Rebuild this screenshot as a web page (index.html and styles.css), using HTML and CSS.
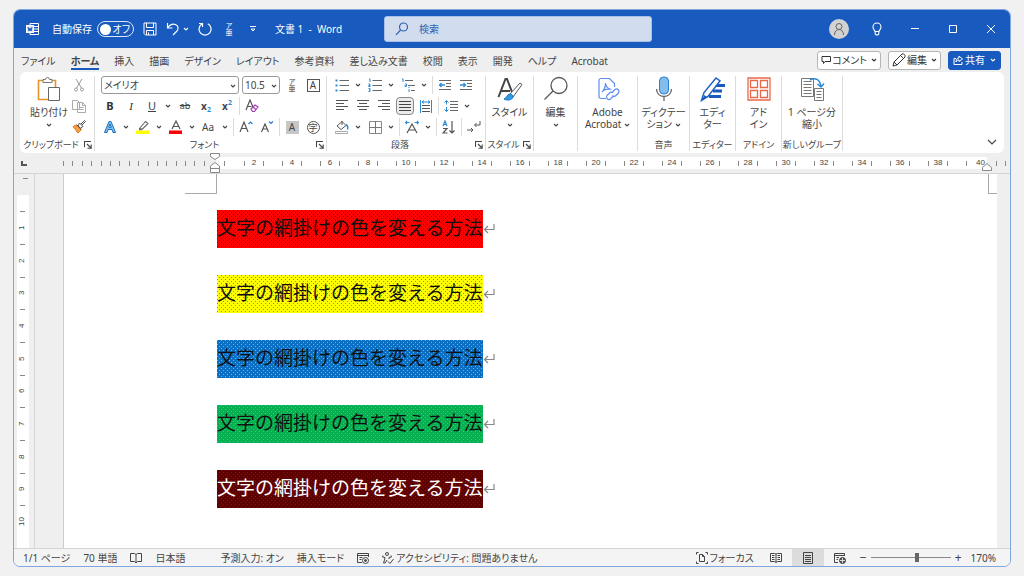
FILE: index.html
```html
<!DOCTYPE html>
<html lang="ja">
<head>
<meta charset="utf-8">
<title>文書 1 - Word</title>
<link rel="stylesheet" href="styles.css">
</head>
<body>
<svg class="defs" aria-hidden="true">
  <symbol id="chev" viewBox="0 0 6 4"><path d="M1 1l2 2 2-2" fill="none" stroke="currentColor" stroke-width="1.1"/></symbol>
  <symbol id="launch" viewBox="0 0 8 8"><path d="M.5 6V.5H7M3 3l4 4M7.2 3.5v3.7H3.500" fill="none" stroke="currentColor" stroke-width="1.1"/></symbol>
  <symbol id="ret" viewBox="0 0 12 12"><path d="M11 1v5.500H2M5 3L1.500 6.500 5 10" fill="none" stroke="currentColor" stroke-width="1.200"/></symbol>
</svg>
<div class="window">
  <header class="titlebar">
    <div class="quick">
      <svg class="s14" viewBox="0 0 14 14" fill="none" stroke="#fff"><path d="M4 3V1.500h8.500v11H4V11M7.500 4.500h5M7.500 7h5M7.500 9.500h5"/><rect x=".5" y="3.500" width="7" height="7" fill="#dce6f6"/><path d="M2 5l1 4 1-3 1 3 1-4" stroke="#185abd"/></svg>
      <label class="autosave">自動保存<input type="checkbox" class="sr"><span class="toggle"><i></i>オフ</span></label>
      <button class="tb" aria-label="保存"><svg class="s14" viewBox="0 0 14 14" fill="none" stroke="currentColor"><path d="M1 1h12v12H2.500L1 11.500zM3.500 1v4.500h7V1M3.500 13V8.500h7V13M5.500 13v-2.500"/></svg></button>
      <button class="tb undo" aria-label="元に戻す"><svg class="s14" viewBox="0 0 14 14" fill="none" stroke="currentColor" stroke-width="1.200"><path d="M1.500 1v5h5M1.500 6C4 2.500 7 1.500 9.500 2.500s3.500 4 1.500 6.500L7 13"/></svg><svg class="chev"><use href="#chev"/></svg></button>
      <button class="tb" aria-label="繰り返し"><svg class="s14" viewBox="0 0 14 14" fill="none" stroke="currentColor" stroke-width="1.200"><path d="M1 1.500h3.500V5M4.300 1.700A6 6 0 1 0 9.800 1.700"/></svg></button>
      <button class="tb ruby" aria-label="ルビ"><span>ア</span><span>亜</span></button>
      <button class="tb" aria-label="カスタマイズ"><svg class="s8" viewBox="0 0 8 8" fill="none" stroke="currentColor"><path d="M1 1.500h6M2 4h4L4 6z"/></svg></button>
      <h1>文書 1&nbsp; -&nbsp; Word</h1>
    </div>
    <label class="search"><svg class="s14" viewBox="0 0 14 14" fill="none" stroke="#2f62b0" stroke-width="1.200"><circle cx="8.500" cy="5" r="4"/><path d="M5.600 8L1 12.800"/></svg><input type="text" placeholder="検索" aria-label="検索"></label>
    <div class="winbtns">
      <button class="avatar" aria-label="アカウント"><svg class="s14" viewBox="0 0 14 14" fill="none" stroke="#666"><circle cx="7" cy="4.500" r="3"/><path d="M2.500 13c0-3.500 2-5.500 4.500-5.500s4.500 2 4.500 5.500"/></svg></button>
      <button aria-label="ヒント"><svg class="s14" viewBox="0 0 14 14" fill="none" stroke="currentColor" stroke-width="1.100"><path d="M5 9.500C4.500 8 3 7 3 5a4 4 0 0 1 8 0c0 2-1.500 3-2 4.500zM5.200 9.500V12l1 1h1.600l1-1V9.500"/></svg></button>
      <button aria-label="最小化"><svg class="s10" viewBox="0 0 10 10" stroke="currentColor"><path d="M1 4.500h8"/></svg></button>
      <button aria-label="最大化"><svg class="s10" viewBox="0 0 10 10" fill="none" stroke="currentColor"><path d="M1.500 1.500h7v7h-7z"/></svg></button>
      <button aria-label="閉じる"><svg class="s10" viewBox="0 0 10 10" stroke="currentColor"><path d="M1 1l8 8M9 1L1 9"/></svg></button>
    </div>
  </header>

  <div class="tabrow">
    <nav class="tabs">
      <button>ファイル</button><button class="on">ホーム</button><button>挿入</button><button>描画</button><button>デザイン</button><button>レイアウト</button><button>参考資料</button><button>差し込み文書</button><button>校閲</button><button>表示</button><button>開発</button><button>ヘルプ</button><button>Acrobat</button>
    </nav>
    <div class="actions">
      <button><svg class="s10" viewBox="0 0 10 10" fill="none" stroke="currentColor"><path d="M1 1.500h8.500v5H4L2.500 8.500v-2H1z"/></svg>コメント<svg class="chev"><use href="#chev"/></svg></button>
      <button><svg class="s14" viewBox="0 0 14 14" fill="none" stroke="currentColor"><path d="M1 13l1-4 8-8 1.500-.2 1.500 1.500L13 4l-8 8zM8.500 2.500l3 3M2 9l3 3"/></svg>編集<svg class="chev"><use href="#chev"/></svg></button>
      <button class="share"><svg class="s10" viewBox="0 0 10 10" fill="none" stroke="currentColor"><path d="M3 3.500H1v6h8V7M6 1l3.500 3L6 6.500V5C4.500 5 3.500 5.500 3 7c0-2.500 1-4 3-4z"/></svg>共有<svg class="chev"><use href="#chev"/></svg></button>
    </div>
  </div>

  <section class="ribbon">
    <div class="group">
      <div class="clip">
        <button class="big paste"><svg class="s26" viewBox="0 0 26 26"><path d="M2.500 4.500h17v19h-17z" fill="#fff" stroke="#e8912d" stroke-width="1.600"/><path d="M7 6.500V3.500h2.500a2 2 0 0 1 4 0H16v3z" fill="#fff" stroke="#777"/><path d="M12.500 11.500h11v13h-11z" fill="#fff" stroke="#666"/></svg><span>貼り付け</span><svg class="chev"><use href="#chev"/></svg></button>
        <div class="stack">
          <button class="ic" aria-label="切り取り"><svg class="s14" viewBox="0 0 14 14" fill="none" stroke="#999"><path d="M4 1l5.500 9M10 1L4.500 10"/><circle cx="4" cy="11.500" r="1.500"/><circle cx="10" cy="11.500" r="1.500"/></svg></button>
          <button class="ic" aria-label="コピー"><svg class="s14" viewBox="0 0 14 14" fill="#fff" stroke="#aaa"><path d="M.5 1.500h5l2 2v7h-7zM5.500 3.500h5l3 3v7h-8zM10.500 3.500v3h3M7.500 8.500h4M7.500 10.500h4"/></svg></button>
          <button class="ic" aria-label="書式のコピー"><svg class="s14" viewBox="0 0 14 14" fill="none" stroke="#555"><path d="M1 6.500l3-1.500 5 5-3 3z" fill="#f6a04a" stroke="#e07b1e"/><path d="M4.500 4.500l5 5M6 6l1.500-3 3.500 3.500L8.500 8zM9 4l3.500-3.500 1 1L10 5"/></svg></button>
        </div>
      </div>
      <div class="cap"><span>クリップボード</span><button aria-label="詳細"><svg class="s8"><use href="#launch"/></svg></button></div>
    </div>

    <div class="group">
      <div class="rows">
        <div class="row">
          <label class="sel name"><select aria-label="フォント"><option>メイリオ</option></select><svg class="chev"><use href="#chev"/></svg></label>
          <label class="sel size"><select aria-label="サイズ"><option>10.5</option></select><svg class="chev"><use href="#chev"/></svg></label>
          <button class="ic ruby" aria-label="ルビ"><span>ア</span><span>亜</span></button>
          <button class="ic" aria-label="囲み線"><span class="boxed">A</span></button>
        </div>
        <div class="row">
          <button class="ic"><b>B</b></button>
          <button class="ic"><i class="serif">I</i></button>
          <button class="split"><u>U</u><svg class="chev"><use href="#chev"/></svg></button>
          <button class="ic"><s>ab</s></button>
          <button class="ic"><span class="x">x<sub>2</sub></span></button>
          <button class="ic"><span class="x">x<sup>2</sup></span></button>
          <span class="sep"></span>
          <button class="ic" aria-label="書式のクリア"><svg class="s14" viewBox="0 0 14 14" fill="none" stroke="#555" stroke-width="1.200"><path d="M1 11L5 1l3 7M2.500 7.500h4"/><path d="M6 10l4-4 3 2-3.500 4.500H7.500z" fill="#fff" stroke="#a33fb5"/><path d="M8 8l3 2.500" stroke="#a33fb5"/></svg></button>
        </div>
        <div class="row">
          <button class="split" aria-label="文字の効果"><svg class="s14" viewBox="0 0 14 14"><path d="M1.500 12.500L6 1.500h2l4.500 11h-2.500L9 9.500H5l-1 3zM5.800 7.300h2.500L7 4z" fill="#7fc0ee" stroke="#1b6fc0"/></svg><svg class="chev"><use href="#chev"/></svg></button>
          <button class="split" aria-label="蛍光ペン"><svg class="s14" viewBox="0 0 14 14"><path d="M3.500 8.500L9.500 1.500 12 3.500 6 9.500l-2.500.500zM4 8l2 2" fill="none" stroke="#666" stroke-width="1.100"/><path d="M0 10.500h13V14H0z" fill="#ff0"/></svg><svg class="chev"><use href="#chev"/></svg></button>
          <button class="split" aria-label="フォントの色"><svg class="s14" viewBox="0 0 14 14"><path d="M3 9l4-8 4 8M4.500 6.500h5" fill="none" stroke="#555" stroke-width="1.200"/><path d="M0 10.500h13V14H0z" fill="red"/></svg><svg class="chev"><use href="#chev"/></svg></button>
          <button class="split">Aa<svg class="chev"><use href="#chev"/></svg></button>
          <span class="sep"></span>
          <button class="ic" aria-label="拡大"><svg class="s14" viewBox="0 0 14 14" fill="none" stroke="#555" stroke-width="1.200"><path d="M1 12L5 2l4 10M2.500 8.500h5"/><path d="M9.500 4l2-2 2 2" stroke="#2b7cd3"/></svg></button>
          <button class="ic" aria-label="縮小"><svg class="s14" viewBox="0 0 14 14" fill="none" stroke="#555" stroke-width="1.200"><path d="M1.500 12L5 4l3.500 8M3 9h4"/><path d="M9 1.500l2 2 2-2" stroke="#2b7cd3"/></svg></button>
          <span class="sep"></span>
          <button class="ic"><span class="shaded">A</span></button>
          <button class="ic"><span class="round">字</span></button>
        </div>
      </div>
      <div class="cap"><span>フォント</span><button aria-label="詳細"><svg class="s8"><use href="#launch"/></svg></button></div>
    </div>

    <div class="group">
      <div class="rows">
        <div class="row">
          <button class="split" aria-label="箇条書き"><svg class="s14" viewBox="0 0 14 14"><path d="M4.500 2.500H14M4.500 7.500H14M4.500 12.500H14" stroke="#666"/><path d="M.5 1.500h2v2h-2zM.5 6.500h2v2h-2zM.5 11.500h2v2h-2z" fill="#2b8ad6"/></svg><svg class="chev"><use href="#chev"/></svg></button>
          <button class="split" aria-label="段落番号"><svg class="s14" viewBox="0 0 14 14" fill="none"><path d="M4.500 2.500H14M4.500 7.500H14M4.500 12.500H14" stroke="#666"/><path d="M1 1h1v3M.5 6H2v1.500H.7v1H2.500M.5 10.500H2v3H.5M1 12h1" stroke="#2b8ad6"/></svg><svg class="chev"><use href="#chev"/></svg></button>
          <button class="split" aria-label="アウトライン"><svg class="s14" viewBox="0 0 14 14" fill="none"><path d="M4 2.500h8M7 7.500h7M10 12.500h4" stroke="#666"/><path d="M1 1h1v3M4 6h1.500v2.500H4V7M8 11v3M8 9v1" stroke="#2b8ad6"/></svg><svg class="chev"><use href="#chev"/></svg></button>
          <span class="sep"></span>
          <button class="ic" aria-label="インデント解除"><svg class="s14" viewBox="0 0 14 14" fill="none" stroke="#666"><path d="M1 2.500h12M8 5.500h5M8 8.500h5M1 11.500h12"/><path d="M7 7H1.500M3.500 5l-2 2 2 2" stroke="#2b8ad6" stroke-width="1.300"/></svg></button>
          <button class="ic" aria-label="インデント"><svg class="s14" viewBox="0 0 14 14" fill="none" stroke="#666"><path d="M1 2.500h12M8 5.500h5M8 8.500h5M1 11.500h12"/><path d="M1 7h5.500M4.500 5l2 2-2 2" stroke="#2b8ad6" stroke-width="1.300"/></svg></button>
        </div>
        <div class="row">
          <button class="ic" aria-label="左揃え"><svg class="s14" viewBox="0 0 14 14" stroke="#555"><path d="M1 1.500h12M1 4.500h8M1 7.500h12M1 10.500h8"/></svg></button>
          <button class="ic" aria-label="中央揃え"><svg class="s14" viewBox="0 0 14 14" stroke="#555"><path d="M1 1.500h12M3 4.500h8M1 7.500h12M3 10.500h8"/></svg></button>
          <button class="ic" aria-label="右揃え"><svg class="s14" viewBox="0 0 14 14" stroke="#555"><path d="M1 1.500h12M5 4.500h8M1 7.500h12M5 10.500h8"/></svg></button>
          <button class="ic pressed" aria-label="両端揃え"><svg class="s14" viewBox="0 0 14 14" stroke="#444"><path d="M1 2.500h12M1 5.500h12M1 8.500h12M1 11.500h12"/></svg></button>
          <button class="ic" aria-label="均等割り付け"><svg class="s14" viewBox="0 0 14 14" fill="none" stroke="#555"><path d="M3 6.500h8M3 9.500h8M3 12.500h8"/><path d="M1.500 1v13M12.500 1v13M3 3h8M5 1.500L3 3l2 1.500M9 1.500L11 3 9 4.500" stroke="#2b8ad6"/></svg></button>
          <span class="sep"></span>
          <button class="split" aria-label="行間"><svg class="s14" viewBox="0 0 14 14" fill="none" stroke="#666"><path d="M6 2.500h8M6 5.500h8M6 8.500h8M6 11.500h8"/><path d="M2.500 1.500v4M2.500 8v4.500M.5 3.500l2-2 2 2M.5 10.500l2 2 2-2" stroke="#2b8ad6"/></svg><svg class="chev"><use href="#chev"/></svg></button>
        </div>
        <div class="row">
          <button class="split" aria-label="塗りつぶし"><svg class="s14" viewBox="0 0 14 14" fill="none" stroke="#555"><path d="M2 6l5-4.500 4 4-5 4zM7 1v4"/><path d="M11 4.500c2 1 2 3 1.500 5" stroke="#2b8ad6" stroke-width="1.500"/><path d="M.5 11.500h12v2H.5z" stroke="#aaa"/></svg><svg class="chev"><use href="#chev"/></svg></button>
          <button class="split" aria-label="罫線"><svg class="s14" viewBox="0 0 14 14" fill="none"><path d="M1.500 1.500h12v12h-12z" stroke="#888"/><path d="M7.500 1.500v12M1.500 7.500h12" stroke="#777"/></svg><svg class="chev"><use href="#chev"/></svg></button>
          <span class="sep"></span>
          <button class="split" aria-label="拡張書式"><svg class="s14" viewBox="0 0 14 14" fill="none" stroke="#555" stroke-width="1.200"><path d="M2 13l5-9 5 9M4 10h6"/><path d="M.5 2.500h4M9.500 2.500h4M2 1L.5 2.500 2 4M12 1l1.500 1.500L12 4" stroke="#2b8ad6"/></svg><svg class="chev"><use href="#chev"/></svg></button>
          <span class="sep"></span>
          <button class="ic" aria-label="並べ替え"><svg class="s14" viewBox="0 0 14 14" fill="none" stroke="#555" stroke-width="1.200"><path d="M1 6l2-5 2 5M2 4.500h2" stroke="#2b8ad6"/><path d="M1 8.500h4L1 13h4.500M10 1v12M7.500 10.500L10 13l2.500-2.500"/></svg></button>
          <span class="sep"></span>
          <button class="ic" aria-label="編集記号"><svg class="s14" viewBox="0 0 14 14" fill="none" stroke="#555"><path d="M13 1v4H8M9.500 3L7.500 5l2 2M0 10h6M4 8l2 2-2 2"/></svg></button>
        </div>
      </div>
      <div class="cap"><span>段落</span><button aria-label="詳細"><svg class="s8"><use href="#launch"/></svg></button></div>
    </div>

    <div class="group">
      <button class="big"><svg class="s26" viewBox="0 0 26 26" fill="none"><path d="M1.500 21L8.500 3h1.500l5 13M4 15h9" stroke="#444" stroke-width="2"/><path d="M13 18L23 7l2 1.500L16 21z" fill="#fff" stroke="#555"/><path d="M7 23c3-1 3-5 6-5 2 0 3 1.500 3 3-1 3-5 4-9 2z" fill="#2f9be0" stroke="#1b6fc0"/></svg><span>スタイル</span><svg class="chev"><use href="#chev"/></svg></button>
      <div class="cap"><span>スタイル</span><button aria-label="詳細"><svg class="s8"><use href="#launch"/></svg></button></div>
    </div>
    <div class="group">
      <button class="big"><svg class="s26" viewBox="0 0 26 26" fill="#fff" stroke="#555" stroke-width="1.300"><circle cx="16" cy="9.500" r="8"/><path d="M10 15L1.500 23.500"/></svg><span>編集</span><svg class="chev"><use href="#chev"/></svg></button>
    </div>
    <div class="group">
      <button class="big"><svg class="s26" viewBox="0 0 26 26" fill="none" stroke="#5b8def" stroke-width="1.200"><path d="M11 22.500H6a2 2 0 0 1-2-2v-16a2 2 0 0 1 2-2h8.500l5 5V11"/><path d="M10.500 7c.5 4 2.500 6 6 6.500M10.500 7c.3 4-.7 6-3.500 9M8.500 14.500c2-1.200 4-1.500 6-1.300"/><path d="M18 20.500l-2.500 2.500a2.500 2.500 0 0 1-3.500-3.500l2.500-2.500a2.500 2.500 0 0 1 3.500 0M17.500 16l2.500-2.500a2.500 2.500 0 0 1 3.500 3.500L21 19.500a2.500 2.500 0 0 1-3.500 0"/></svg><span>Adobe<br>Acrobat <svg class="chev"><use href="#chev"/></svg></span></button>
    </div>
    <div class="group">
      <button class="big"><svg class="s26" viewBox="0 0 26 26" fill="none"><rect x="8.500" y="1" width="9" height="17" rx="4" fill="#83bdec" stroke="#2b7cd3"/><path d="M5.500 13c0 10 15 10 15 0M13 20.500V25" stroke="#666" stroke-width="1.300"/></svg><span>ディクテー<br>ション <svg class="chev"><use href="#chev"/></svg></span></button>
      <div class="cap"><span>音声</span></div>
    </div>
    <div class="group">
      <button class="big"><svg class="s26" viewBox="0 0 26 26" fill="none"><path d="M13 9.500h12M13 15h9M9 20.500h12" stroke="#185abd" stroke-width="3"/><path d="M1.500 24.500l2.500-8L16 2l4 3L8 20.500z" fill="#fff" stroke="#1f5fc4" stroke-width="1.500"/><path d="M2 24l5-3-2.500-2z" fill="#185abd"/></svg><span>エディ<br>ター</span></button>
      <div class="cap"><span>エディター</span></div>
    </div>
    <div class="group">
      <button class="big"><svg class="s26" viewBox="0 0 26 26" fill="none" stroke="#e8694a" stroke-width="1.300"><path d="M2 2h22v22H2zM4.500 4.500h7v7h-7zM14.500 4.500h7v7h-7zM4.500 14.500h7v7h-7zM14.500 14.500h7v7h-7z"/></svg><span>アド<br>イン</span></button>
      <div class="cap"><span>アドイン</span></div>
    </div>
    <div class="group">
      <button class="big"><svg class="s26" viewBox="0 0 26 26" fill="#fff" stroke="#777"><path d="M2.500 2.500h12v18h-12zM4.500 5.500h8M4.500 8.500h8M4.500 11.500h8M4.500 14.500h8M4.500 17.500h8M15.500 12.500h9v12h-9zM17.500 15.500h5M17.500 18.500h5M17.500 21.500h5"/><path d="M11 4c5-3 10-1 11 7M18.500 8l3.500 3 3-3.500" fill="none" stroke="#2b8ad6" stroke-width="1.500"/></svg><span>1 ページ分<br>縮小</span></button>
      <div class="cap"><span>新しいグループ</span></div>
    </div>
    <button class="collapse" aria-label="リボンを折りたたむ"><svg class="s10" viewBox="0 0 10 10" fill="none" stroke="#444" stroke-width="1.200"><path d="M1 3l4 4 4-4"/></svg></button>
  </section>

  <div class="hruler">
    <span class="corner"></span>
    <div class="neg"><i></i><i></i><i></i><i></i><i></i><i></i><i></i><i></i><i></i><i></i><i></i><i></i><i></i><i></i><i></i><i></i></div>
    <div class="pos">
      <svg class="mark first" viewBox="0 0 10 20" fill="#fff" stroke="#888"><path d="M.5.5h9v3L5 6.500.5 3.500zM.5 13L5 9.500 9.500 13v6.500h-9zM.5 15.500h9"/></svg>
      <span class="zero"><i></i></span>
      <span>2</span><span>4</span><span>6</span><span>8</span><span>10</span><span>12</span><span>14</span><span>16</span><span>18</span><span>20</span><span>22</span><span>24</span><span>26</span><span>28</span><span>30</span><span>32</span><span>34</span><span>36</span><span>38</span><span class="last">40</span>
      <svg class="mark end" viewBox="0 0 10 8" fill="#fff" stroke="#888"><path d="M.5 7.500v-3L5 .5l4.500 4v3z"/></svg>
    </div>
    <div class="tail"><i></i><i></i></div>
  </div>

  <div class="work">
    <div class="vruler">
      <div class="top"><i></i></div>
      <div class="scale"><span>1</span><span>2</span><span>3</span><span>4</span><span>5</span><span>6</span><span>7</span><span>8</span><span>9</span><span>10</span><span class="end-tick"></span></div>
    </div>
    <main class="page">
      <div class="crops"><i class="cl"></i><i class="cr"></i></div>
      <article>
        <p><span class="red">文字の網掛けの色を変える方法</span><svg class="s12"><use href="#ret"/></svg></p>
        <p><span class="yellow">文字の網掛けの色を変える方法</span><svg class="s12"><use href="#ret"/></svg></p>
        <p><span class="blue">文字の網掛けの色を変える方法</span><svg class="s12"><use href="#ret"/></svg></p>
        <p><span class="green">文字の網掛けの色を変える方法</span><svg class="s12"><use href="#ret"/></svg></p>
        <p><span class="dark">文字の網掛けの色を変える方法</span><svg class="s12"><use href="#ret"/></svg></p>
      </article>
    </main>
  </div>

  <footer class="status">
    <div class="left">
      <span>1/1 ページ</span><span>70 単語</span>
      <svg class="s12" viewBox="0 0 12 12" fill="none" stroke="currentColor"><path d="M6 2.500L4.500 1.500h-4v8h4L6 11l1.500-1.500h4v-8h-4L6 2.500V10.500"/></svg>
      <span class="lang">日本語</span><span>予測入力: オン</span><span>挿入モード</span>
      <svg class="s12" viewBox="0 0 12 12" fill="none" stroke="currentColor"><path d="M5 10.500H.5v-9h11V5M.5 3.500h11M2.500 5.500h3M2.500 7.500h2"/><circle cx="8.500" cy="8.500" r="3"/><circle cx="8.500" cy="8.500" r="1" fill="currentColor"/></svg>
      <span class="acc"><svg class="s12" viewBox="0 0 12 12" fill="none" stroke="currentColor"><circle cx="5" cy="2" r="1.500"/><path d="M1 3.500L.5 5l2.500.5L2.500 8 1.500 11h1.500L5 8M9 3.500l.5 1.500-2.500.5V7M6 9.500L8 11.500 11.500 7"/></svg>アクセシビリティ: 問題ありません</span>
    </div>
    <div class="right">
      <button class="focus"><svg class="s12" viewBox="0 0 12 12" fill="none" stroke="currentColor"><path d="M2.500.5h-2v2M9.500.5h2v2M2.500 11.500h-2v-2M9.500 11.500h2v-2M3.500 2.500h3l2 2v5h-5zM6.500 2.500v2h2"/></svg>フォーカス</button>
      <button class="view" aria-label="閲覧モード"><svg class="s12" viewBox="0 0 12 12" fill="none" stroke="currentColor"><path d="M6 2L4.500 1.500h-4v8h4L6 10.500l1.500-1h4v-8h-4L6 2v8.500M2 3.500h2.500M2 5.500h2.500M2 7.500h2.500M7.500 3.500H10M7.500 5.500H10M7.500 7.500H10"/></svg></button>
      <button class="view on" aria-label="印刷レイアウト"><svg class="s12" viewBox="0 0 12 12" fill="none" stroke="currentColor"><path d="M1.500.5h9v11h-9zM3 3.500h6M3 5.500h6M3 7.500h6M3 9.500h6"/></svg></button>
      <button class="view" aria-label="Web レイアウト"><svg class="s12" viewBox="0 0 12 12" fill="none" stroke="currentColor"><path d="M4 10.500H.5v-9h10V4M.5 3.500h10M2.500 5.500H5M2.500 7.500H4"/><circle cx="8.500" cy="8.500" r="3" fill="#555"/><path d="M6 8.500h5M8.500 6v5" stroke="#ddd"/></svg></button>
      <div class="zoom"><button aria-label="縮小">−</button><input type="range" min="0" max="100" value="58" aria-label="ズーム"><button aria-label="拡大">+</button></div>
      <span>170%</span>
    </div>
  </footer>
</div>
</body>
</html>
```

FILE: styles.css
```css
* { box-sizing: border-box; }
body {
  margin: 0;
  padding: 9px 13px;
  min-height: 100vh;
  display: flex;
  background: #f1f1f1;
  color: #444;
  font: 10px/14px "Noto Sans", "Noto Sans CJK JP", sans-serif;
  font-feature-settings: "palt";
}
button, input, select {
  font: inherit;
  font-feature-settings: inherit;
  color: inherit;
  background: none;
  border: 0;
  padding: 0;
  margin: 0;
}
button { display: flex; align-items: center; justify-content: center; white-space: nowrap; }
svg { flex: none; }
.defs { position: absolute; width: 0; height: 0; }
.s8 { width: 8px; height: 8px; }
.s10 { width: 10px; height: 10px; }
.s12 { width: 12px; height: 12px; }
.s14 { width: 14px; height: 14px; }
.s26 { width: 26px; height: 26px; }
.chev { width: 6px; height: 4px; }
.sr { position: absolute; opacity: 0; }

.window {
  flex: 1;
  min-width: 0;
  display: flex;
  flex-direction: column;
  overflow: hidden;
  border: 1px solid #80a6de;
  border-radius: 7px;
  background: #efefef;
}

/* Title bar */
.titlebar { display: flex; height: 38px; background: #185abd; color: #fff; align-items: center; }
.quick { flex: 0 0 370px; display: flex; align-items: center; padding-left: 12px; gap: 8px; }
.autosave { display: flex; align-items: center; gap: 5px; padding-left: 4px; }
.toggle {
  display: flex;
  align-items: center;
  justify-content: space-between;
  flex: none;
  width: 37px;
  height: 16px;
  padding: 0 3px 0 2px;
  border: 1px solid #dce6f6;
  border-radius: 8px;
  white-space: nowrap;
}
.toggle i { flex: none; width: 11px; height: 11px; border-radius: 50%; background: #fff; }
.tb { min-width: 16px; height: 20px; }
.undo { gap: 3px; }
.ruby { flex-direction: column; font-size: 7px; line-height: 7px; }
.titlebar h1 { margin: 0 0 0 6px; font-size: 10px; font-weight: 400; white-space: nowrap; }
.search {
  flex: 0 1 268px;
  display: flex;
  align-items: center;
  gap: 10px;
  height: 26px;
  padding: 0 10px;
  border: 1px solid #a9c0e6;
  border-radius: 3px;
  background: #d1dcee;
}
.search input { flex: 1; min-width: 0; }
.search input::placeholder { color: #2f62b0; opacity: 1; }
.winbtns { display: flex; margin-left: auto; }
.winbtns button { width: 38px; height: 24px; }
.winbtns .avatar { width: 20px; height: 20px; margin: 2px 9px; border-radius: 50%; background: #d2d2d2; }

/* Tabs */
.tabrow { display: flex; align-items: center; justify-content: space-between; height: 24px; padding: 0 9px 0 7px; }
.tabs { display: flex; gap: 15px; }
.tabs button { height: 20px; padding-top: 3px; border-bottom: 2px solid transparent; }
.tabs .on { font-weight: 700; border-color: #185abd; }
.actions { display: flex; gap: 7px; }
.actions button { height: 19px; padding: 0 3px; gap: 1px; background: #fff; border: 1px solid #b5b5b5; border-radius: 3px; color: #333; }
.actions .chev { margin-left: 3px; }
.actions .share { gap: 2px; padding: 0 4px; background: #185abd; border-color: #185abd; color: #fff; }

/* Ribbon */
.ribbon {
  display: grid;
  grid-template-columns: 75px 232px 159px 48px 44px 60px 52px 46px 46px 61px 1fr;
  margin: 0 6px;
  height: 81px;
  border-radius: 6px;
  background: #fff;
}
.group { display: flex; flex-direction: column; min-width: 0; margin: 4px 0 2px; border-right: 1px solid #dcdcdc; }
.rows { display: flex; flex-direction: column; gap: 3px; padding-left: 6px; }
.row { display: flex; align-items: center; gap: 3px; height: 18px; }
.ic { width: 18px; height: 18px; flex: none; }
.split { width: 30px; height: 18px; flex: none; padding: 0 2px; justify-content: space-between; }
.split u { width: 14px; font-size: 11px; }
.row b, .row .serif { font-size: 11px; color: #333; }
.serif { font-family: "Liberation Serif", serif; }
.row s { font-size: 9px; }
.x { display: flex; font-weight: 700; }
.x sub, .x sup { font-size: 7px; line-height: 7px; color: #2b8ad6; }
.x sub { align-self: flex-end; }
.sep { width: 1px; height: 18px; background: #dcdcdc; }
.pressed { border: 1px solid #888; border-radius: 4px; background: #ebebeb; }
.boxed, .shaded, .round { width: 13px; height: 13px; line-height: 11px; text-align: center; }
.boxed, .round { border: 1px solid #555; }
.shaded { background: #c6c6c6; line-height: 13px; }
.round { border-radius: 50%; font-size: 9px; }
.sel { position: relative; display: flex; height: 18px; }
.sel select { width: 100%; appearance: none; padding: 0 12px 0 2px; border: 1px solid #999; border-radius: 3px; }
.sel .chev { position: absolute; right: 3px; top: 8px; }
.name { width: 138px; }
.size { width: 38px; }
.clip { display: flex; justify-content: space-between; padding: 0 6px 0 10px; }
.stack { display: flex; flex-direction: column; gap: 3px; }
.big { display: flex; flex-direction: column; justify-content: flex-start; gap: 4px; line-height: 12px; text-align: center; }
.big .chev { margin-top: 1px; }
.big span .chev { display: inline-block; vertical-align: middle; margin: 0; }
.cap { display: flex; align-items: center; margin-top: auto; height: 12px; font-size: 9px; line-height: 12px; white-space: nowrap; }
.cap span { flex: 1; display: flex; justify-content: center; min-width: 0; }
.cap button { width: 12px; }
.collapse { align-self: end; justify-self: end; margin: 0 7px 6px; }

/* Horizontal ruler */
.hruler { display: flex; align-items: center; height: 21px; overflow: hidden; border-bottom: 1px solid #d4d4d4; font: 8px/12px "Liberation Sans", sans-serif; }
.hruler i { width: 1px; height: 5px; background: #888; }
.corner { width: 6px; height: 5px; margin: 0 36px 0 7px; border: solid #555; border-width: 0 0 2px 2px; }
.neg { display: flex; justify-content: space-between; width: 142px; margin-right: 11px; }
.pos { position: relative; display: flex; height: 12px; background: #fff; }
.pos span { display: flex; align-items: center; justify-content: space-between; width: 38px; padding: 0 9px; }
.pos span::before, .pos span::after { content: ""; width: 1px; height: 5px; background: #888; }
.pos .zero { width: 19px; padding: 0 8px; }
.pos .zero::before, .pos .zero::after, .pos .last::after { content: none; }
.pos .last { width: 30px; padding: 0 2px 0 9px; }
.mark { position: absolute; width: 10px; }
.first { height: 20px; left: -6px; top: -4px; }
.end { height: 8px; right: -5px; top: 6px; }
.tail { display: flex; gap: 8px; margin-left: 9px; }

/* Document */
.work { flex: 1; display: flex; min-height: 0; }
.vruler { width: 21px; padding: 0 5px 0 3px; border-right: 1px solid #d8d8d8; display: flex; flex-direction: column; font: 8px/10px "Liberation Sans", sans-serif; }
.top { height: 21px; padding: 4px 0 0 6px; }
.top i { display: block; width: 5px; height: 1px; background: #888; }
.scale { flex: 1; min-height: 0; overflow: hidden; padding-top: 16px; background: #fff; }
.scale span { display: flex; align-items: center; justify-content: center; height: 33px; writing-mode: vertical-rl; transform: rotate(180deg); position: relative; }
.scale span:nth-child(3n) { height: 32px; }
.scale .end-tick { height: 2px; }
.scale span::after { content: ""; position: absolute; bottom: 0; left: 2px; width: 5px; height: 1px; background: #888; }
.page { flex: 1; margin: 0 13px 0 28px; border-left: 1px solid #ccc; background: #fff; }
.crops { display: flex; justify-content: space-between; height: 20px; }
.cl { width: 32px; margin-left: 121px; border: solid #aaa; border-width: 0 1px 1px 0; }
.cr { width: 9px; border: solid #aaa; border-width: 0 0 1px 1px; }
article { display: flex; flex-direction: column; gap: 27px; padding: 16px 0 0 153px; }
p { display: flex; align-items: center; margin: 0; color: #888; }
p span {
  padding: 0 1px 0 0;
  height: 38px;
  color: #111;
  font: 19px/34px "Noto Sans CJK JP", sans-serif;
  font-feature-settings: normal;
  background-image: conic-gradient(from 0deg at 1px 1px, transparent 75%, var(--dot) 0), conic-gradient(from 0deg at 1px 1px, transparent 75%, var(--dot) 0);
  background-size: 4px 4px;
  background-position: 0 0, 2px 2px;
  white-space: nowrap;
}
.red { background-color: #fe0000; --dot: #800000; }
.yellow { background-color: #ff0; --dot: #9a9a00; }
.blue { background-color: #0b70c4; --dot: #69aee6; }
.green { background-color: #06b050; --dot: #4fc840; }
.dark { background-color: #5e0000; --dot: #a80000; }
p .dark { color: #fff; }

/* Status bar */
.status { display: flex; justify-content: space-between; height: 18px; border-top: 1px solid #d4d4d4; background: #f4f4f4; }
.left, .right { display: flex; align-items: center; white-space: nowrap; }
.left { gap: 13px; padding-left: 9px; }
.lang { margin-right: 22px; }
.acc, .focus { display: flex; align-items: center; gap: 2px; }
.focus { margin-right: 6px; }
.view { width: 32px; height: 17px; }
.view.on { background: #dcdcdc; }
.right { padding-right: 14px; }
.zoom { display: flex; align-items: center; gap: 4px; margin: 0 9px 0 4px; font-size: 12px; }
.zoom input { appearance: none; width: 80px; height: 12px; background: linear-gradient(#888, #888) center / 100% 1px no-repeat; }
.zoom input::-webkit-slider-thumb { appearance: none; width: 4px; height: 9px; background: #666; }
```
